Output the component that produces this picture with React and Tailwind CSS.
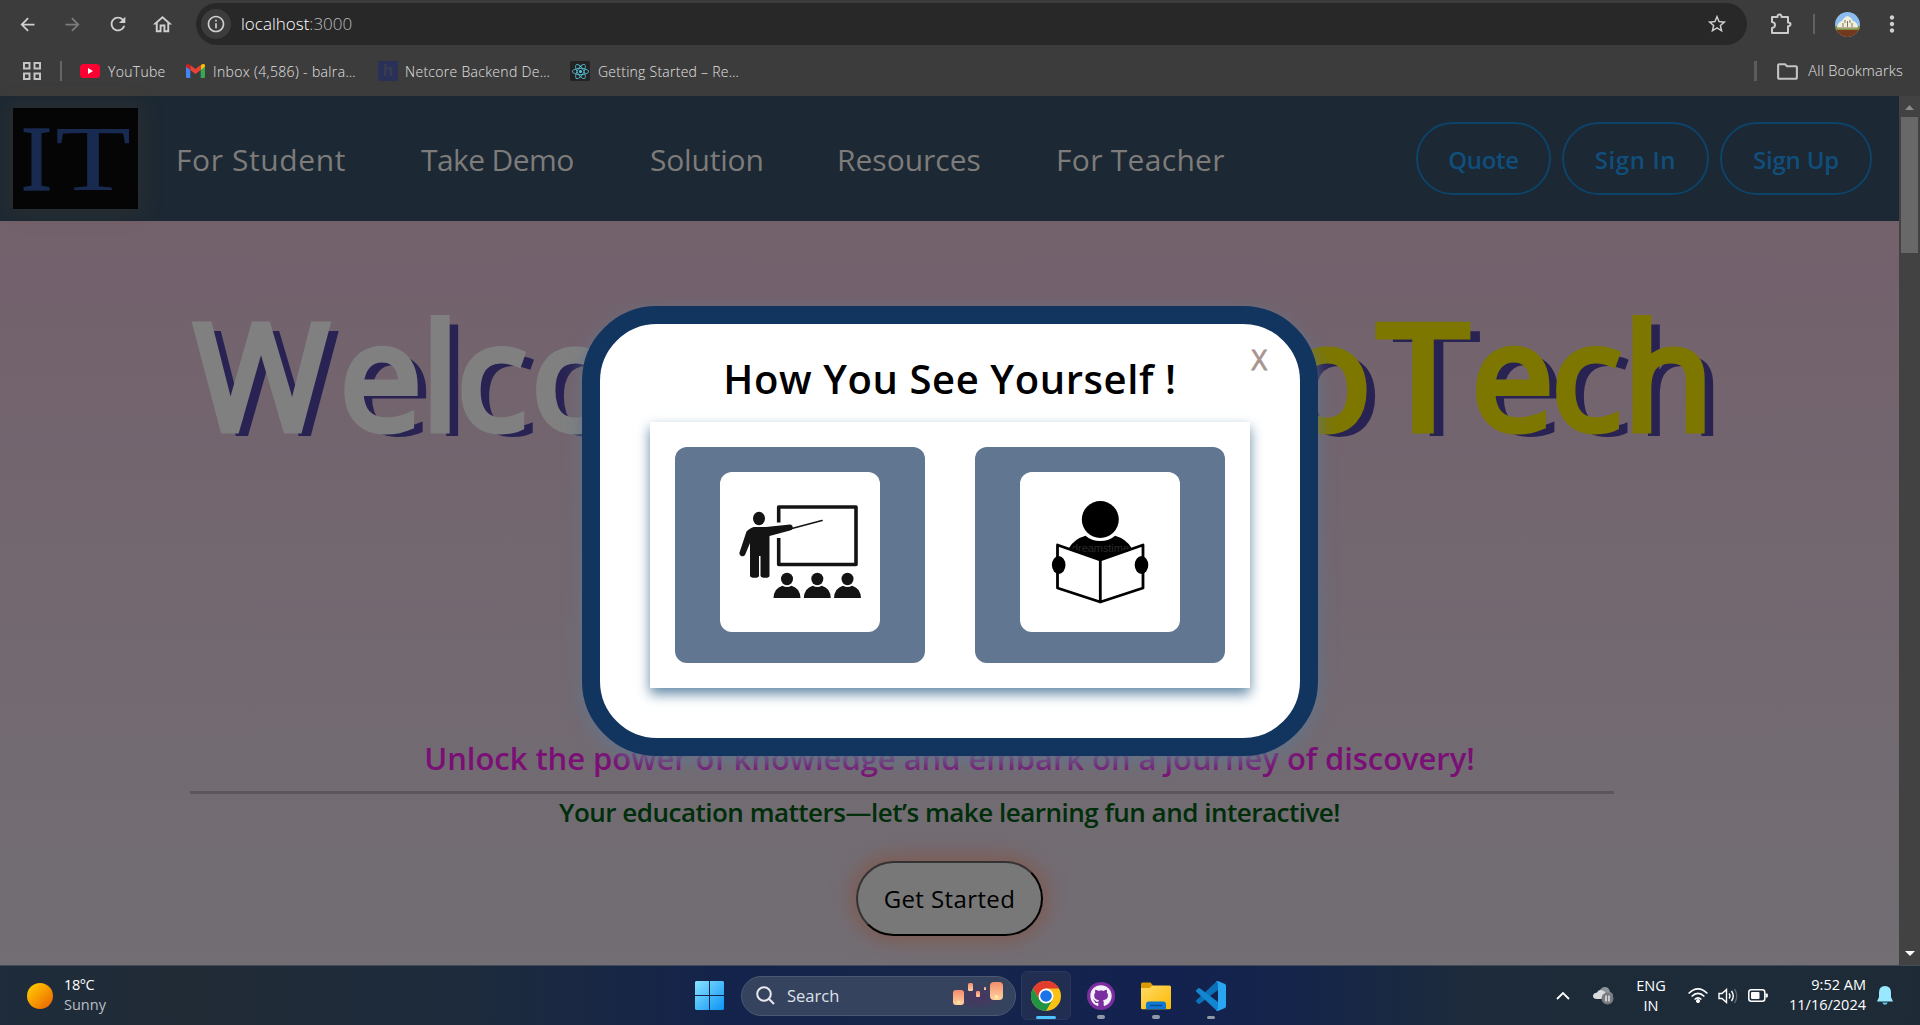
import React from "react";
import { SiReact } from "react-icons/si";
import { FaGithub } from "react-icons/fa";
import {
  MdArrowBack,
  MdArrowForward,
  MdRefresh,
  MdOutlineHome,
  MdInfoOutline,
  MdStarBorder,
  MdMoreVert,
  MdOutlineFolder,
} from "react-icons/md";

function Favicon({ kind }) {
  if (kind === "youtube")
    return (
      <svg width="20" height="14" viewBox="0 0 20 14">
        <rect width="20" height="14" rx="3.5" fill="#ff0033" />
        <path d="M8 4l5 3-5 3z" fill="#fff" />
      </svg>
    );
  if (kind === "gmail")
    return (
      <svg width="19" height="14" viewBox="0 0 19 14">
        <path d="M0 1.5V13q0 1 1 1h3.3V5z" fill="#4285f4" />
        <path d="M19 1.5V13q0 1-1 1h-3.3V5z" fill="#34a853" />
        <path d="M14.7 1.3V6L19 2.8V1.6C19 0 17 -.6 15.7.5z" fill="#fbbc04" />
        <path d="M4.3 6V1L9.5 5l5.2-4v5L9.5 10z" fill="#ea4335" />
        <path d="M0 1.6v1.2L4.3 6V1.3L3.3.5C2-.6 0 0 0 1.6z" fill="#c5221f" />
      </svg>
    );
  if (kind === "netcore")
    return (
      <span className="flex h-5 w-5 items-center justify-center bg-[#2a3158] font-['Liberation_Sans',sans-serif] text-[17px] leading-5 font-bold text-[#3b3c50]">
        h
      </span>
    );
  return (
    <span className="flex h-5 w-5 items-center justify-center rounded-xs bg-[#232323]">
      <SiReact size={17} color="#58c4dc" />
    </span>
  );
}

function Bookmark({ kind, label, className }) {
  return (
    <div className={"flex shrink-0 items-center " + className}>
      <Favicon kind={kind} />
      <span className="whitespace-nowrap">{label}</span>
    </div>
  );
}

function BrowserChrome() {
  return (
    <header className="h-24 w-full bg-[#3c3c3c] font-['Open_Sans',sans-serif] text-[#e2e2e2]">
      <div className="flex h-12 items-center pl-[17px] text-[#d0d0d0] [&>*]:shrink-0">
        <MdArrowBack size={21} />
        <MdArrowForward size={21} className="ml-[24px] text-[#7c7c7c]" />
        <MdRefresh size={22} className="ml-6" />
        <MdOutlineHome size={23} className="ml-[22px]" />
        <div className="ml-[22px] flex h-[42px] w-[1551px] items-center rounded-full bg-[#282828] pr-[19px] pl-[5px]">
          <span className="flex h-[30px] w-[30px] items-center justify-center rounded-full bg-[#3c3c3c]">
            <MdInfoOutline size={20} />
          </span>
          <span className="ml-[10px] text-[17px] font-light text-white">
            localhost<span className="text-[#bdbdbd]">:3000</span>
          </span>
          <MdStarBorder size={22} className="ml-auto" />
        </div>
        <svg className="ml-[23px]" width="22" height="22" viewBox="0 0 22 22" fill="none" stroke="#cbcbcb" strokeWidth="2">
          <path d="M2 4h5.500q-.2-2.500 2-2.500t2 2.500H18v5.500q2.500 0 2.500 1.800T18 13.200V20H2v-5q3-.3 3-3T2 9z" strokeLinejoin="round" />
        </svg>
        <span className="ml-[21px] h-5 w-0.5 bg-[#606060]" />
        <svg className="ml-5" width="25" height="25" viewBox="0 0 25 25">
          <clipPath id="avatar">
            <circle cx="12.5" cy="12.5" r="12.5" />
          </clipPath>
          <g clipPath="url(#avatar)">
            <rect width="25" height="25" fill="#8dbdf0" />
            <rect y="14" width="25" height="6" fill="#7f9140" />
            <path d="M2 15q1-5 5-6 2-4 5.500-5Q16 5 18 9q4 1 5 6l-1 1H3z" fill="#f1eedc" />
            <path d="M12.500 9v6M8 11v4M17 11v4M10 8v3M15 8v3" stroke="#7e775f" strokeWidth="1" />
            <rect x="3" y="15" width="19" height="1.5" fill="#b9b39c" />
            <rect y="18" width="25" height="7" fill="#74381f" />
          </g>
        </svg>
        <MdMoreVert size={26} className="ml-[19px]" />
      </div>
      <div className="flex h-[46px] items-center pl-[23px] text-[14px] font-light">
        <svg width="18" height="18" viewBox="0 0 18 18" fill="none" stroke="#c4c4c4" strokeWidth="2">
          <path d="M1 1h5.500v5.500H1zM11.500 1H17v5.500h-5.500zM1 11.500h5.500V17H1zM11.500 11.500H17V17h-5.500z" />
        </svg>
        <span className="ml-[19px] h-5 w-0.5 bg-[#666]" />
        <Bookmark kind="youtube" label="YouTube" className="ml-[18px] w-[106px] gap-2 tracking-[0.3px]" />
        <Bookmark kind="gmail" label="Inbox (4,586) - balra…" className="w-[192px] gap-2 tracking-[0.35px]" />
        <Bookmark kind="netcore" label="Netcore Backend De…" className="w-[192px] gap-[7px] tracking-[0.3px]" />
        <Bookmark kind="react" label="Getting Started – Re…" className="gap-2 tracking-[0.25px]" />
        <div className="ml-auto flex items-center pr-[17px]">
          <span className="mr-[18px] h-5 w-[3px] bg-[#5c5c5c]" />
          <MdOutlineFolder size={25} className="mr-2 text-[#c4c4c4]" />
          <span className="text-[14.500px] tracking-[0.2px]">All Bookmarks</span>
        </div>
      </div>
    </header>
  );
}

function Logo() {
  return (
    <div className="flex h-[101px] w-[125px] items-center justify-start bg-[#050505] pl-[8px] font-['Liberation_Serif',serif] text-[93px] leading-[93px] text-[#182a50] shadow-[0_0_20px_5px_rgba(100,75,40,0.2)]">
      <span className="[-webkit-text-stroke:1.5px_#182a50]">I</span>
      <span className="ml-[3px] origin-left scale-x-[1.34]">T</span>
    </div>
  );
}

function Navbar() {
  return (
    <nav className="flex h-[125px] items-center bg-[#1c2833] pr-[27px] pl-[13px]">
      <Logo />
      <div className="flex pt-[3px] text-[30px] leading-10 whitespace-nowrap text-[#7d7c7a]">
        <span className="ml-[38px] w-[245px] tracking-[0.6px]">For Student</span>
        <span className="w-[229px] tracking-[-0.6px]">Take Demo</span>
        <span className="w-[187px] tracking-[-0.2px]">Solution</span>
        <span className="w-[219px]">Resources</span>
        <span className="tracking-[0.3px]">For Teacher</span>
      </div>
      <div className="ml-auto flex gap-[11px] text-[24px] font-semibold text-[#104e7c]">
        <button className="h-[73px] w-[135px] rounded-full border-2 border-[#0d4369] pt-0.5 tracking-[-0.3px]">Quote</button>
        <button className="h-[73px] w-[147px] rounded-full border-2 border-[#0d4369] pt-0.5 tracking-[0.6px]">Sign In</button>
        <button className="h-[73px] w-[152px] rounded-full border-2 border-[#0d4369] pt-0.5 tracking-[-0.2px]">Sign Up</button>
      </div>
    </nav>
  );
}

function Hero() {
  return (
    <main className="flex h-[744px] flex-col items-center overflow-hidden bg-linear-to-b from-[#73616c] to-[#726e74]">
      <h1 className="mt-[78px] flex h-[148px] w-[1515px] shrink-0 justify-between text-[146px] leading-[150px] font-normal whitespace-nowrap [text-shadow:12px_6px_0_#282353]">
        <span className="pl-0.5 text-[#808080] [-webkit-text-stroke:7px_#808080]">
          <span className="tracking-[11px]">W</span>
          <span className="tracking-[0px]">e</span>
          <span className="tracking-[-2px]">l</span>
          <span className="tracking-[5px]">co</span>
        </span>
        <span className="-mr-[10px] flex text-[#7d7700] [-webkit-text-stroke:7px_#7d7700]">
          <span className="tracking-[7px]">o</span>
          <span className="origin-left scale-x-[1.12] tracking-[13px]">T</span>
          <span className="tracking-[-2px]">e</span>
          <span className="tracking-[2px]">c</span>
          <span className="tracking-[4px]">h</span>
        </span>
      </h1>
      <p className="mt-[291px] h-10 shrink-0 text-[31px] leading-10 font-semibold tracking-[-0.05px] whitespace-nowrap text-[#7a0f76]">
        Unlock the power of knowledge and embark on a journey of discovery!
      </p>
      <hr className="mt-[13px] mr-[95px] h-[3px] w-[1424px] shrink-0 border-0 bg-[#5d555b]" />
      <p className="mt-[3px] h-[30px] shrink-0 text-[26px] leading-[30px] font-semibold tracking-[-0.5px] whitespace-nowrap text-[#002e0a]">
        Your education matters—let’s make learning fun and interactive!
      </p>
      <button className="mt-[34px] h-[75px] w-[187px] shrink-0 rounded-full border-2 border-t-[#333] border-r-black border-b-black border-l-[#333] bg-[#787878] pt-px text-[24px] tracking-[0.4px] text-black shadow-[0_0_20px_4px_#80594f]">
        Get Started
      </button>
    </main>
  );
}

function TeacherIcon() {
  return (
    <svg width="160" height="160" viewBox="0 0 160 160" fill="#141414">
      <path d="M58.700 50.500V35H136v57.500H58.700V66" fill="none" stroke="#141414" strokeWidth="3.600" strokeLinejoin="round" />
      <ellipse cx="39" cy="46.500" rx="6" ry="6.700" />
      <path d="M34 55h12l24-2.500q3 .5 2.700 3.500-.3 2-2.700 2.500L49.500 64v40q-.5 2-4.500 1.800-4 0-4.500-1.800V84h-1.500v20q-.5 2-4.500 1.800-4 0-4.500-1.800V71l-5 12q-1.500 2-4 1-2-1.500-1.500-3.500l7-21Q30.500 55.500 34 55z" />
      <path d="M70 57L102 48.500" stroke="#141414" strokeWidth="1.700" strokeLinecap="round" />
      {[67, 97.3, 127.5].map((x) => (
        <g key={x}>
          <ellipse cx={x} cy="107" rx="6" ry="6.200" />
          <path d={`M${x - 13.5} 126q.5-10 9-12.300 4.500 2.800 9 0 8.500 2.300 9 12.300z`} />
        </g>
      ))}
    </svg>
  );
}

function StudentIcon() {
  return (
    <svg width="160" height="160" viewBox="0 0 160 160">
      <circle cx="80.300" cy="47.500" r="18.500" />
      <path d="M49 76q5-9 16.500-12.300 6 5.300 14.800 5.300t14.800-5.300Q106.500 67 111.500 76L80.300 89z" />
      <text x="52" y="80" fontSize="11" fill="#2b2b2b" fontFamily="Liberation Sans, sans-serif" textLength="57">dreamstime</text>
      <path d="M39 74.500L80.300 89.500 122 74.500V115L80.300 128.500 39 115z" fill="#fff" />
      <path d="M37.500 73L80.300 88 123 73V116L80.300 130 37.500 116zM80.300 88V130" fill="none" stroke="#000" strokeWidth="2.800" strokeLinejoin="round" />
      <ellipse cx="38.700" cy="93" rx="6.800" ry="9" />
      <ellipse cx="121.500" cy="93" rx="6.800" ry="9" />
    </svg>
  );
}

function Choice({ children }) {
  return (
    <div className="flex h-[216px] w-[250px] justify-center rounded-xl bg-[#617791] pt-[25px]">
      <div className="h-40 w-40 rounded-xl bg-white">{children}</div>
    </div>
  );
}

function Modal() {
  return (
    <div className="absolute top-[209.5px] left-[582px] h-[450px] w-[736px] rounded-[75px] border-[18px] border-[#12355f] bg-white shadow-[0_6px_18px_0px_#64748a]">
      <span className="absolute top-[22px] right-[33px] text-[27px] leading-7 font-medium text-[#a89490] [-webkit-text-stroke:0.8px_#a89490]">X</span>
      <h2 className="mt-[31px] h-12 text-center text-[40px] leading-[48px] font-semibold tracking-[0.6px] text-black">How You See Yourself !</h2>
      <div className="mx-auto mt-[19px] flex h-[266px] w-[600px] justify-between bg-white p-[25px] shadow-[0_6px_12px_#6489a6]">
        <Choice>
          <TeacherIcon />
        </Choice>
        <Choice>
          <StudentIcon />
        </Choice>
      </div>
    </div>
  );
}

function Scrollbar() {
  return (
    <div className="flex h-[869px] w-[21px] flex-col items-center bg-[#424242]">
      <svg className="mt-[9px] mb-[7px]" width="9" height="5" viewBox="0 0 9 5">
        <path d="M0 5L4.500 0 9 5z" fill="#8a8a8a" />
      </svg>
      <span className="h-[136px] w-[17px] bg-[#686868]" />
      <svg className="mt-auto mb-[9px]" width="10" height="5" viewBox="0 0 10 5">
        <path d="M0 0L5 5 10 0z" fill="#fff" />
      </svg>
    </div>
  );
}

function Lanterns() {
  return (
    <svg className="ml-auto" width="56" height="28" viewBox="0 0 56 28">
      <defs>
        <linearGradient id="lantern" x1="0" y1="0" x2="0" y2="1">
          <stop offset="0" stopColor="#f58d6c" />
          <stop offset="1" stopColor="#ffd3a0" />
        </linearGradient>
        <radialGradient id="haze">
          <stop offset="0" stopColor="#4b3460" />
          <stop offset="1" stopColor="#4b3460" stopOpacity="0" />
        </radialGradient>
      </defs>
      <ellipse cx="28" cy="15" rx="26" ry="13" fill="url(#haze)" />
      <g fill="url(#lantern)">
        <rect x="3" y="8" width="11" height="15" rx="3" />
        <rect x="18" y="1" width="5" height="8" rx="1.500" />
        <rect x="26" y="9" width="4" height="6" rx="1" />
        <rect x="34" y="5" width="2" height="3" />
        <rect x="40" y="0" width="13" height="18" rx="4" />
      </g>
      <circle cx="46.500" cy="15" r="2" fill="#ffe9a0" />
      <circle cx="8.500" cy="20" r="1.500" fill="#ffe9a0" />
    </svg>
  );
}

function ChromeIcon() {
  return (
    <svg width="30" height="30" viewBox="0 0 48 48">
      <circle cx="24" cy="24" r="24" fill="#fbc116" />
      <path d="M3.200 12A24 24 0 0 1 44.800 12H24L13.600 30z" fill="#e33b2e" />
      <path d="M3.200 12A24 24 0 0 0 24 48L34.400 30 24 34 13.600 30z" fill="#229342" />
      <circle cx="24" cy="24" r="12" fill="#fff" />
      <circle cx="24" cy="24" r="9.300" fill="#1a73e8" />
    </svg>
  );
}

function FolderIcon() {
  return (
    <svg width="30" height="28" viewBox="0 0 30 28">
      <defs>
        <linearGradient id="folder" x1="0" y1="0" x2="1" y2="1">
          <stop offset="0" stopColor="#ffdb68" />
          <stop offset="1" stopColor="#fcb900" />
        </linearGradient>
      </defs>
      <path d="M0 2q0-1.500 1.500-1.500h8L12.500 4v4H0z" fill="#dc9a06" />
      <path d="M0 6h8l4-2.500h16.500Q30 3.500 30 5v21q0 1.200-1.500 1.200h-27Q0 27.200 0 26z" fill="url(#folder)" />
      <path d="M5 27.200v-4.700q0-3 3-3h14q3 0 3 3v4.700z" fill="#0f77cf" />
      <path d="M9 23.500h12" stroke="#074d92" strokeWidth="1.300" />
    </svg>
  );
}

function CodeIcon() {
  return (
    <svg width="30" height="30" viewBox="0 0 30 30">
      <path d="M22 9V0q-1.300 0-2 1L.3 19.200q-.7.900 0 1.700l2 1.800q.7.500 1.500 0z" fill="#0a70b8" />
      <path d="M22 21v9q-1.300 0-2-1L.3 10.800q-.7-.9 0-1.700l2-1.800q.7-.5 1.500 0z" fill="#1286d0" />
      <path d="M22 0l7 3q1 .6 1 1.700v20.600q0 1.100-1 1.700l-7 3q-1.300 0-2-1 2 .5 2-1.500v-25Q22 .5 20 1q.7-1 2-1z" fill="#2aa5f2" />
    </svg>
  );
}

function TaskItem({ active, children }) {
  return (
    <div
      className={
        "flex h-[49px] w-[50px] flex-col items-center rounded-md pt-[9px] " +
        (active ? "border border-[#2b375c] bg-[#222d52]" : "border border-transparent")
      }
    >
      <span className="flex h-[30px] items-center">{children}</span>
      <span className={active ? "mt-[5px] h-1 w-5 rounded-full bg-[#4cc2ff]" : "mt-[5px] h-1 w-2 rounded-full bg-[#9297a8]"} />
    </div>
  );
}

function Tray() {
  return (
    <div className="ml-auto flex h-full items-center pr-[27px] text-[14.500px] leading-5 text-white">
      <svg width="14" height="9" viewBox="0 0 14 9" fill="none" stroke="#fff" strokeWidth="1.800">
        <path d="M1 8L7 2l6 6" />
      </svg>
      <svg className="ml-[23px]" width="21" height="19" viewBox="0 0 21 19">
        <path d="M6 6Q8 1 12 1t5 5q3 1 3 4H6z" fill="#8b9298" />
        <path d="M4 13Q0 13 0 10q0-3 4-3.500Q6 3 9.500 4.500 13 6 13 8.500L16 13z" fill="#d9dcde" />
        <circle cx="14.500" cy="12.500" r="6" fill="#777b7f" />
        <path d="M13 9.500v6M16 9.500v6" stroke="#fff" strokeWidth="1.200" />
      </svg>
      <div className="ml-[21px] w-8 text-center">
        ENG
        <br />
        IN
      </div>
      <svg className="ml-[21px]" width="20" height="15" viewBox="0 0 20 15" fill="none" stroke="#fff" strokeWidth="1.500">
        <path d="M.6 5.500Q10-3.800 19.400 5.500M3.600 8.500q6.400-6.300 12.800 0M6.600 11.500q3.400-3.300 6.800 0" />
        <circle cx="10" cy="13" r="1.300" fill="#fff" />
      </svg>
      <svg className="ml-[10px]" width="20" height="16" viewBox="0 0 20 16" fill="none" stroke="#fff" strokeWidth="1.400">
        <path d="M1 5.500h3L8.500 1.500v13L4 10.500H1zM11 5.500q2 2.500 0 5M13.500 3q3.500 5 0 10" />
        <path d="M16.500 1q4.500 7 0 14" stroke="#5c656d" />
      </svg>
      <svg className="ml-[10px]" width="20" height="13" viewBox="0 0 20 13" fill="none">
        <rect x=".8" y=".8" width="16" height="11.400" rx="2.500" stroke="#fff" strokeWidth="1.500" />
        <rect x="3" y="3" width="8.500" height="7" rx="1" fill="#fff" />
        <path d="M17.500 4.500h1.500q.8 0 .8 1v2q0 1-.8 1h-1.500z" fill="#fff" />
      </svg>
      <div className="mb-0.5 ml-5 w-[78px] text-right whitespace-nowrap">
        9:52 AM
        <br />
        11/16/2024
      </div>
      <svg className="ml-[11px]" width="16" height="19" viewBox="0 0 16 19" fill="#98e8ff">
        <path d="M8 0q6 .3 6 6.500V11l2 4.500H0L2 11V6.500Q2 .3 8 0z" />
        <path d="M5.300 16.500h5.400Q10 18.800 8 18.800t-2.700-2.300z" fill="#5cc8e8" />
      </svg>
    </div>
  );
}

function Taskbar() {
  return (
    <footer className="flex h-[60px] items-center border-t border-[#414b5a] bg-[linear-gradient(90deg,#1e2c3b_0%,#212b36_10%,#1d2b3c_24%,#14234b_38%,#16264a_46%,#13214f_60%,#15254a_68%,#1d2b3a_77%,#1e2b37_100%)] font-['Open_Sans',sans-serif]">
      <div className="flex w-[695px] items-center pl-[27px]">
        <span className="h-[26px] w-[26px] rounded-full bg-linear-to-br from-[#ffd400] to-[#e85a00]" />
        <div className="mb-0.5 ml-[11px] text-[14.500px] leading-5 text-white">
          <span className="tracking-[-0.4px]">18°C</span>
          <br />
          <span className="text-[#b9bfc5]">Sunny</span>
        </div>
      </div>
      <svg width="29" height="29" viewBox="0 0 29 29">
        <defs>
          <linearGradient id="win" x1="0" y1="0" x2="1" y2="1">
            <stop offset="0" stopColor="#8be3ff" />
            <stop offset="1" stopColor="#0a93f5" />
          </linearGradient>
        </defs>
        <path d="M1 0H14V14H0V1zM15 0h13l1 1v13H15zM0 15h14v14H1l-1-1zM15 15h14v13l-1 1H15z" fill="url(#win)" />
      </svg>
      <div className="ml-[17px] flex h-10 w-[275px] items-center rounded-full border border-[#4b5873] bg-[#36435f] pr-[9px] pl-[14px]">
        <svg width="19" height="19" viewBox="0 0 19 19" fill="none" stroke="#e8eaee" strokeWidth="2">
          <circle cx="8" cy="8" r="6.800" />
          <path d="M12.800 12.800L18 18" />
        </svg>
        <span className="ml-3 pt-0.5 text-[16.500px] text-[#dfe2e8]">Search</span>
        <Lanterns />
      </div>
      <div className="ml-[5px] flex gap-[5px]">
        <TaskItem active>
          <ChromeIcon />
        </TaskItem>
        <TaskItem>
          <span className="flex h-7 w-7 items-center justify-center rounded-full bg-[#7c2ea0]">
            <FaGithub size={22} color="#f4f0f8" />
          </span>
        </TaskItem>
        <TaskItem>
          <FolderIcon />
        </TaskItem>
        <TaskItem>
          <CodeIcon />
        </TaskItem>
      </div>
      <Tray />
    </footer>
  );
}

export default function App() {
  return (
    <div className="h-[1025px] w-[1920px] overflow-hidden bg-[#3c3c3c]">
      <BrowserChrome />
      <div className="relative flex h-[869px] font-['Comic_Sans_MS','Open_Sans',sans-serif]">
        <div className="w-[1899px]">
          <Navbar />
          <Hero />
        </div>
        <Scrollbar />
        <Modal />
      </div>
      <Taskbar />
    </div>
  );
}
